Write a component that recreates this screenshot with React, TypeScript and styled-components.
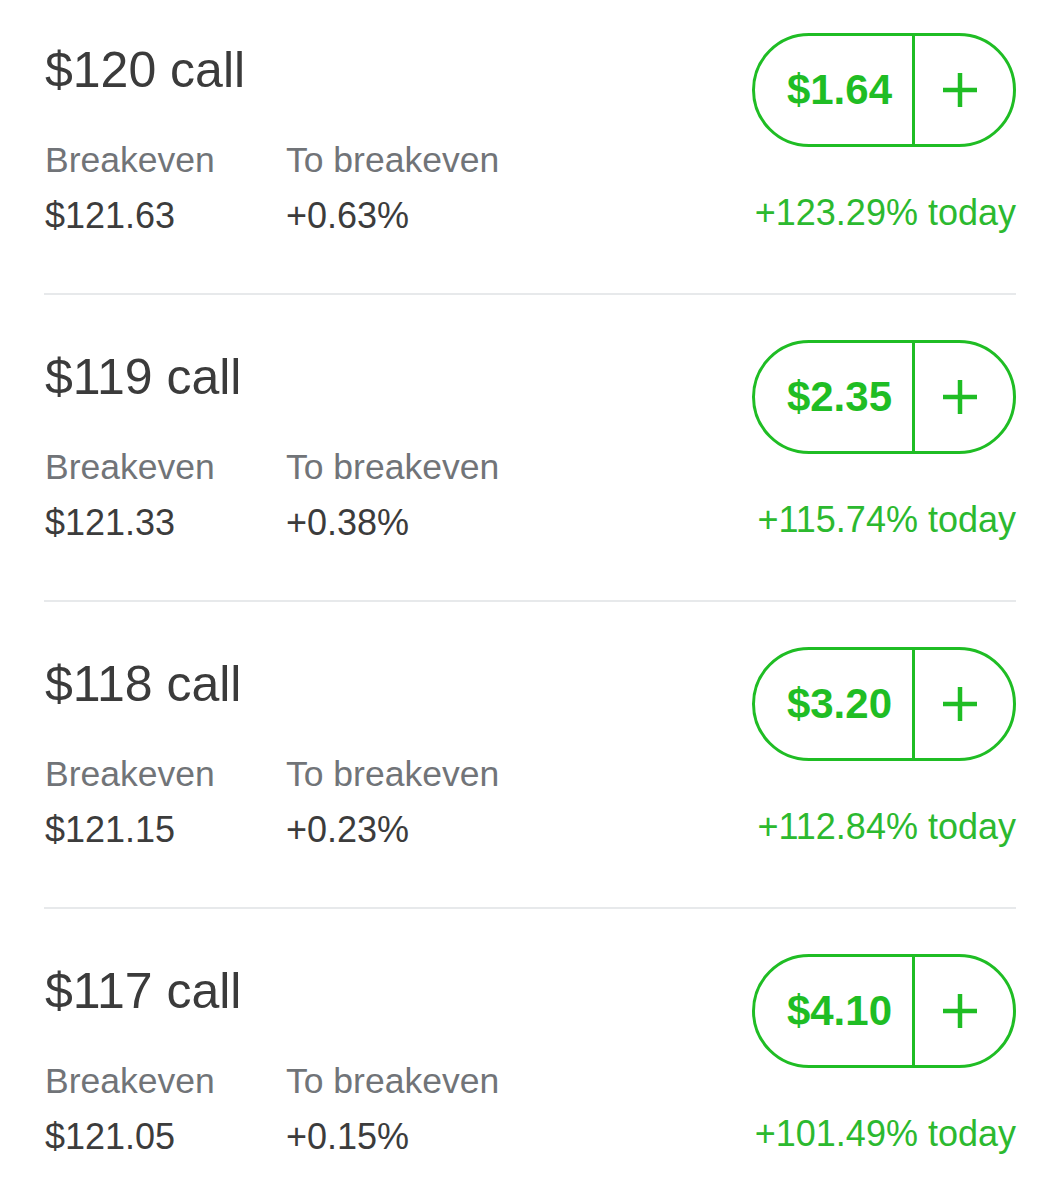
import React from "react";
import styled, { createGlobalStyle } from "styled-components";

const GREEN = "#1fbd24";
const GREEN_TEXT = "#2cb92f";

const GlobalStyle = createGlobalStyle`
  html, body {
    margin: 0;
    padding: 0;
    background: #ffffff;
  }
  body {
    font-family: "Liberation Sans", Arial, Helvetica, sans-serif;
    -webkit-font-smoothing: antialiased;
  }
`;

const Page = styled.div`
  padding: 0 44px;
`;

const Row = styled.div`
  display: flex;
  justify-content: space-between;
  align-items: flex-start;
  padding: 45px 0 57px;
  border-bottom: 2px solid #e7e9eb;
  &:first-child {
    padding-top: 33px;
  }
`;

const Info = styled.div`
  display: flex;
  flex-direction: column;
  padding-top: 9px;
  margin-left: 1px;
`;

const Title = styled.div`
  font-size: 50px;
  line-height: 56px;
  color: #3b3b3b;
  margin-bottom: 42px;
`;

const Stats = styled.div`
  display: flex;
`;

const Stat = styled.div<{ $width?: number }>`
  display: flex;
  flex-direction: column;
  gap: 16px;
  width: ${(p) => (p.$width ? `${p.$width}px` : "auto")};
`;

const Label = styled.div`
  font-size: 35.5px;
  line-height: 40px;
  color: #717478;
  white-space: nowrap;
`;

const Value = styled.div`
  font-size: 36px;
  line-height: 40px;
  color: #3c3c3c;
  white-space: nowrap;
`;

const Quote = styled.div`
  display: flex;
  flex-direction: column;
  align-items: flex-end;
  gap: 46px;
`;

const Pill = styled.div`
  display: flex;
  align-items: stretch;
  box-sizing: border-box;
  height: 114px;
  border: 3px solid ${GREEN};
  border-radius: 57px;
`;

const Price = styled.div`
  display: flex;
  align-items: center;
  padding: 0 20px 0 32px;
  font-size: 42px;
  font-weight: 700;
  color: ${GREEN};
  border-right: 3px solid ${GREEN};
`;

const PlusCell = styled.div`
  display: flex;
  align-items: center;
  justify-content: center;
  box-sizing: border-box;
  width: 98px;
  padding-right: 8px;
`;

const Change = styled.div`
  font-size: 36px;
  line-height: 40px;
  color: ${GREEN_TEXT};
  white-space: nowrap;
  text-align: right;
`;

const PlusIcon = () => (
  <svg width="36" height="36" viewBox="0 0 36 36" aria-hidden="true">
    <line x1="18" y1="1" x2="18" y2="35" stroke={GREEN} strokeWidth="4.5" />
    <line x1="1" y1="18" x2="35" y2="18" stroke={GREEN} strokeWidth="4.5" />
  </svg>
);

type Option = {
  strike: string;
  breakeven: string;
  toBreakeven: string;
  price: string;
  change: string;
};

const options: Option[] = [
  { strike: "$120 call", breakeven: "$121.63", toBreakeven: "+0.63%", price: "$1.64", change: "+123.29% today" },
  { strike: "$119 call", breakeven: "$121.33", toBreakeven: "+0.38%", price: "$2.35", change: "+115.74% today" },
  { strike: "$118 call", breakeven: "$121.15", toBreakeven: "+0.23%", price: "$3.20", change: "+112.84% today" },
  { strike: "$117 call", breakeven: "$121.05", toBreakeven: "+0.15%", price: "$4.10", change: "+101.49% today" },
];

export default function App() {
  return (
    <>
      <GlobalStyle />
      <Page>
        {options.map((o) => (
          <Row key={o.strike}>
            <Info>
              <Title>{o.strike}</Title>
              <Stats>
                <Stat $width={241}>
                  <Label>Breakeven</Label>
                  <Value>{o.breakeven}</Value>
                </Stat>
                <Stat>
                  <Label>To breakeven</Label>
                  <Value>{o.toBreakeven}</Value>
                </Stat>
              </Stats>
            </Info>
            <Quote>
              <Pill>
                <Price>{o.price}</Price>
                <PlusCell>
                  <PlusIcon />
                </PlusCell>
              </Pill>
              <Change>{o.change}</Change>
            </Quote>
          </Row>
        ))}
      </Page>
    </>
  );
}
